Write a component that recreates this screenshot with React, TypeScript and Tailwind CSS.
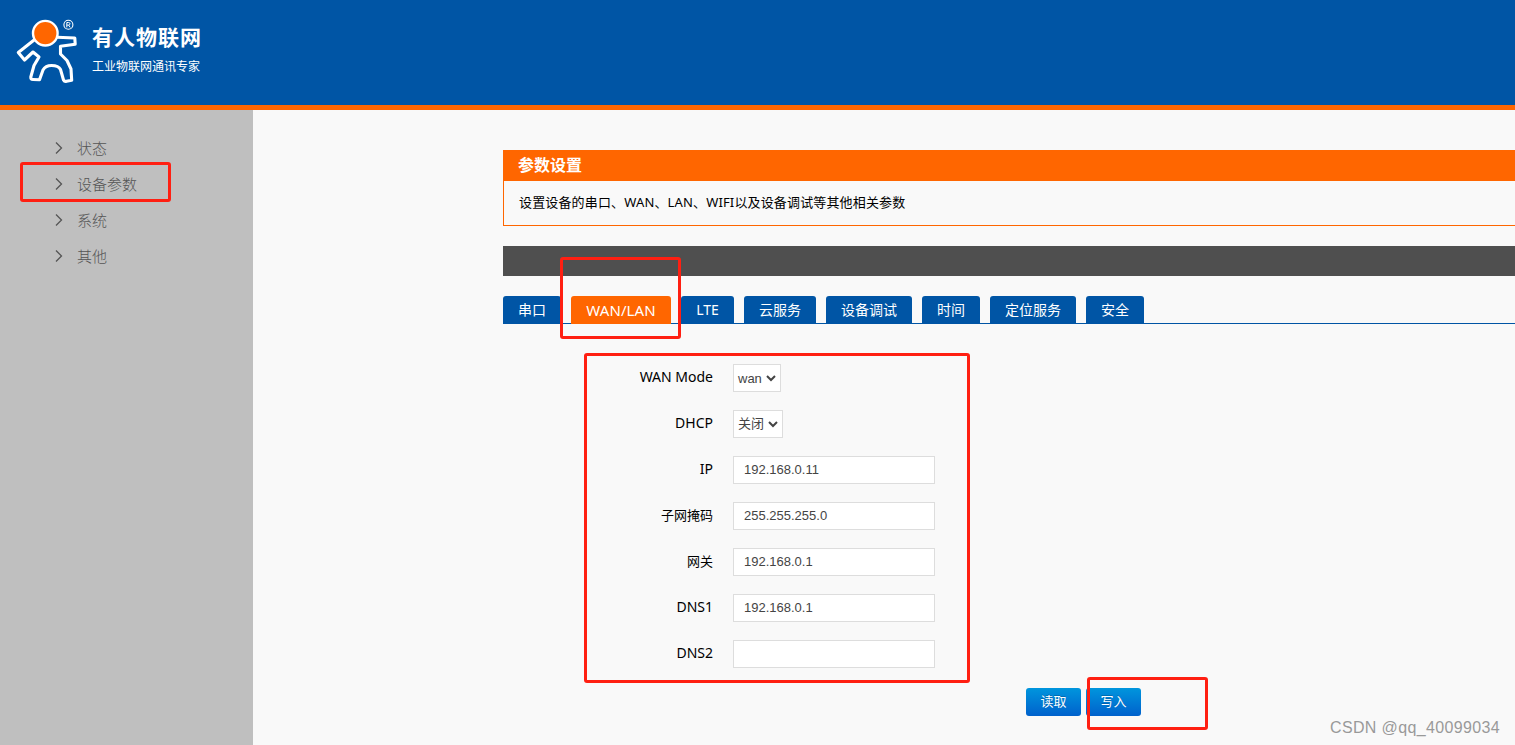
import clsx from "clsx";

const menu = ["状态", "设备参数", "系统", "其他"];

const tabs = [
  { label: "串口", width: "w-[58px]" },
  { label: "WAN/LAN", width: "w-[100px]", active: true },
  { label: "LTE", width: "w-[53px]" },
  { label: "云服务", width: "w-[72px]" },
  { label: "设备调试", width: "w-[86px]" },
  { label: "时间", width: "w-[58px]" },
  { label: "定位服务", width: "w-[86px]" },
  { label: "安全", width: "w-[58px]" },
];

const fields = [
  { label: "WAN Mode", type: "select", value: "wan", width: "w-12", latin: true },
  { label: "DHCP", type: "select", value: "关闭", width: "w-[50px]", latin: true },
  { label: "IP", type: "text", value: "192.168.0.11", latin: true },
  { label: "子网掩码", type: "text", value: "255.255.255.0" },
  { label: "网关", type: "text", value: "192.168.0.1" },
  { label: "DNS1", type: "text", value: "192.168.0.1", latin: true },
  { label: "DNS2", type: "text", value: "", latin: true },
];

function Logo() {
  return (
    <svg width="64" height="68" viewBox="0 0 64 68" fill="none" className="shrink-0">
      <path
        d="M19.7 23.5 L3.3 36.5 L9.5 44 L18 36 L24 41 L19 49.5 L15.8 61 Q15.5 63.5 18 63.5 L24.5 63.7 L28 54 Q30.5 49.5 36.5 49.5 Q43.5 49.5 45.5 53.5 L48.5 64 Q49.5 65.8 51.5 65.3 L56.7 64.3 L56 53 L52 44.5 L45.5 38 L45.5 30.2 L60.2 28.2 L59.8 22 L42 21.3"
        stroke="#fff"
        strokeWidth="3.1"
        strokeLinejoin="round"
      />
      <circle cx="30.3" cy="17.2" r="12.3" fill="#ff6600" stroke="#fff" strokeWidth="2.4" />
      <circle cx="53.4" cy="8.8" r="4.5" stroke="#fff" strokeWidth="1.1" />
      <path
        d="M51.8 11.4 V6.5 H53.6 Q55 6.6 55 7.8 Q55 9 53.6 9.1 H51.8 M53.6 9.1 L55.2 11.4"
        stroke="#fff"
        strokeWidth="1"
      />
    </svg>
  );
}

function Header() {
  return (
    <header className="flex h-[110px] border-b-[5px] border-[#ff6600] bg-[#0055a5] pt-4 pl-[15px] text-white">
      <Logo />
      <div className="ml-[13px] pt-1.5">
        <h1 className="text-[21px] leading-[30px] font-bold tracking-[1px] whitespace-nowrap">有人物联网</h1>
        <p className="mt-1.5 text-[12px] leading-[18px] whitespace-nowrap">工业物联网通讯专家</p>
      </div>
    </header>
  );
}

function Sidebar() {
  return (
    <nav className="w-[253px] shrink-0 bg-[#bfbfbf] pt-5 text-[15px] font-light text-[#555]">
      {menu.map((item) => (
        <div key={item} className="flex h-9 items-center pl-[55px]">
          <svg width="8" height="12" viewBox="0 0 8 12" fill="none" className="mr-3.5">
            <path d="M1 0.5 L6.5 6 L1 11.5" stroke="#555" strokeWidth="1.3" />
          </svg>
          {item}
        </div>
      ))}
    </nav>
  );
}

function Field({ field }: { field: (typeof fields)[number] }) {
  return (
    <div className="flex h-7">
      <label
        className={clsx(
          "mr-5 w-[210px] text-right leading-[26px] text-black",
          field.latin ? "text-[14px]" : "text-[13px]",
        )}
      >
        {field.label}
      </label>
      {field.type === "select" ? (
        <div
          className={clsx(
            "flex items-center justify-between border border-[#ddd] bg-white px-1 font-['Liberation_Sans','Noto_Sans_CJK_SC',sans-serif] text-[13px] whitespace-nowrap text-[#444]",
            field.width,
            field.value === "wan" && "pt-px",
          )}
        >
          {field.value}
          <svg width="10" height="7" viewBox="0 0 10 7" fill="none" className="shrink-0">
            <path d="M1 1 L5 5 L9 1" stroke="#444" strokeWidth="2" />
          </svg>
        </div>
      ) : (
        <input
          defaultValue={field.value}
          className="w-[202px] border border-[#ddd] bg-white px-2.5 font-['Liberation_Sans',sans-serif] text-[13px] text-[#444] outline-none"
        />
      )}
    </div>
  );
}

const buttonClass =
  "h-7 w-[55px] rounded-[3px] bg-linear-to-b from-[#0095dd] to-[#0061cc] text-[13px] text-white [text-shadow:0_-1px_0_rgba(0,0,0,0.2)]";

function Settings() {
  return (
    <main className="min-w-0 flex-1 bg-[#f9f9f9] pt-10 pl-[250px]">
      <section className="h-[76px] border-b border-l border-[#ff6600]">
        <h2 className="h-[31px] bg-[#ff6600] pl-3.5 text-[16px] leading-[30px] font-bold text-white">参数设置</h2>
        <p className="pl-[15px] text-[13px] leading-[43px] tracking-[0.15px] text-black">
          设置设备的串口、WAN、LAN、WIFI以及设备调试等其他相关参数
        </p>
      </section>
      <div className="mt-5 h-[30px] bg-[#4f4f4f]" />
      <div className="mt-5 flex h-7 gap-2.5 border-b border-[#0055a5]">
        {tabs.map((tab) => (
          <button
            key={tab.label}
            type="button"
            className={clsx(
              "h-7 shrink-0 rounded-t-[3px] leading-7 whitespace-nowrap text-white",
              tab.width,
              tab.active ? "bg-[#ff6600] text-[15px] tracking-[0.1px]" : "bg-[#0055a5] text-[14px]",
            )}
          >
            {tab.label}
          </button>
        ))}
      </div>
      <form className="mt-10 flex flex-col gap-[18px]">
        {fields.map((field) => (
          <Field key={field.label} field={field} />
        ))}
      </form>
      <div className="mt-5 flex gap-[5px] pl-[523px]">
        <button type="button" className={buttonClass}>读取</button>
        <button type="button" className={buttonClass}>写入</button>
      </div>
    </main>
  );
}

// Red frames drawn over the page
const marks = [
  "top-[162px] left-[20px] h-[40px] w-[151px]",
  "top-[257px] left-[560px] h-[82px] w-[121px]",
  "top-[353px] left-[584px] h-[330px] w-[386px]",
  "top-[677px] left-[1087px] h-[53px] w-[121px]",
];

export default function App() {
  return (
    <div className="relative flex h-[745px] w-[1515px] flex-col overflow-hidden font-['Noto_Sans','Noto_Sans_CJK_SC',sans-serif]">
      <Header />
      <div className="flex flex-1">
        <Sidebar />
        <Settings />
      </div>
      {marks.map((mark) => (
        <div key={mark} className={clsx("pointer-events-none absolute rounded-[3px] border-3 border-[#ff1f12]", mark)} />
      ))}
      <div className="absolute right-[15px] bottom-[6px] font-['Liberation_Sans',sans-serif] text-[16px] leading-[22px] tracking-[0.36px] whitespace-nowrap text-[#999]">
        CSDN @qq_40099034
      </div>
    </div>
  );
}
